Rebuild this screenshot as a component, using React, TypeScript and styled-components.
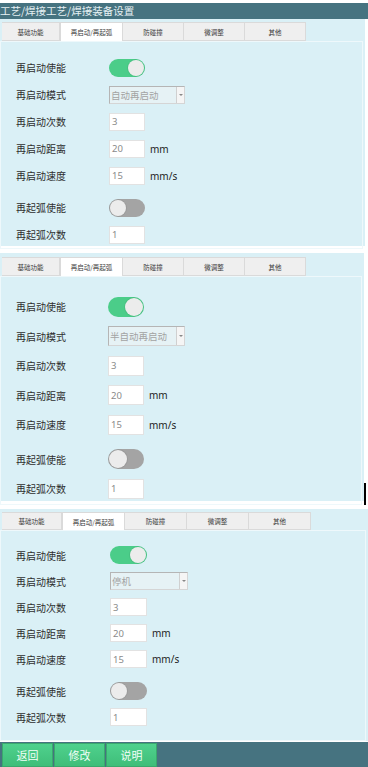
import * as React from 'react';
import styled, { createGlobalStyle } from 'styled-components';

const GlobalStyle = createGlobalStyle`
  html, body {
    margin: 0;
    padding: 0;
    background: #ffffff;
  }
  body {
    font-family: "Noto Sans", "Noto Sans CJK SC", sans-serif;
    color: #333;
  }
`;

interface Layout {
  top: number;
  width: number;
  height: number;
  padTop: number;
  tabH: number;
  tabs: number[];
  contentPad: number;
  rowH: number;
  gap: number;
  ctlX: number;
  ctlH: number;
  smallW: number;
  selectW: number;
}

const Page = styled.div`
  width: 368px;
  height: 767px;
  display: flex;
  flex-direction: column;
  overflow: hidden;
`;

const TitleBar = styled.div`
  margin-top: 3px;
  height: 16px;
  background: #467380;
  color: #e6f1f4;
  font-family: "Noto Sans CJK SC", sans-serif;
  font-size: 10.5px;
  line-height: 16px;
  white-space: nowrap;
`;

const PanelBox = styled.div<{ $w: number; $h: number; $mt: number; $pt: number }>`
  position: relative;
  width: ${({ $w }) => $w}px;
  height: ${({ $h }) => $h}px;
  margin-top: ${({ $mt }) => $mt}px;
  padding-top: ${({ $pt }) => $pt}px;
  box-sizing: border-box;
  background: #daf0f6;
  display: flex;
  flex-direction: column;
`;

const TabBar = styled.div`
  display: flex;
  padding-left: 2px;
`;

const Tab = styled.div<{ $w: number; $h: number; $active?: boolean }>`
  width: ${({ $w }) => $w}px;
  height: ${({ $h }) => $h}px;
  box-sizing: border-box;
  display: flex;
  align-items: center;
  justify-content: center;
  background: ${({ $active }) => ($active ? '#ffffff' : '#efefef')};
  border: 1px solid #dadada;
  border-bottom: ${({ $active }) => ($active ? 'none' : '1px solid #dadada')};
  border-left: ${({ $active }) => ($active ? '1px solid #dadada' : 'none')};
  font-family: "Noto Sans CJK SC", sans-serif;
  font-size: 6.5px;
  color: #3a3a3a;
  white-space: nowrap;
`;

const Content = styled.div<{ $pt: number }>`
  flex: 1;
  margin: 0 2px 0 0;
  border: 1px solid #eef8fb;
  padding: ${({ $pt }) => $pt}px 0 0 15px;
  display: flex;
  flex-direction: column;
`;

const Row = styled.div<{ $h: number; $gap?: number }>`
  display: flex;
  align-items: center;
  height: ${({ $h }) => $h}px;
  margin-top: ${({ $gap }) => $gap || 0}px;
`;

const Label = styled.div<{ $w: number }>`
  width: ${({ $w }) => $w}px;
  font-family: "Noto Sans CJK SC", sans-serif;
  font-size: 10px;
  color: #2e2e2e;
  white-space: nowrap;
`;

const Toggle = styled.div<{ $w: number; $h: number; $on?: boolean }>`
  width: ${({ $w }) => $w}px;
  height: ${({ $h }) => $h}px;
  border-radius: ${({ $h }) => $h / 2}px;
  background: ${({ $on }) => ($on ? '#4bcd89' : '#a4a4a4')};
  display: flex;
  align-items: center;
  justify-content: ${({ $on }) => ($on ? 'flex-end' : 'flex-start')};
  padding: 0 1px;
  box-sizing: border-box;
`;

const Knob = styled.div<{ $s: number }>`
  width: ${({ $s }) => $s}px;
  height: ${({ $s }) => $s}px;
  border-radius: 50%;
  background: #ececec;
  box-shadow: 0 0 0 1px rgba(0, 0, 0, 0.06);
`;

const Select = styled.div<{ $w: number; $h: number }>`
  width: ${({ $w }) => $w}px;
  height: ${({ $h }) => $h}px;
  box-sizing: border-box;
  display: flex;
  background: #e6f2f5;
  border: 1px solid #b5b5b5;
  border-right-color: #d5d5d5;
  border-bottom-color: #d5d5d5;
`;

const SelectText = styled.div`
  flex: 1;
  display: flex;
  align-items: center;
  padding-left: 1px;
  font-family: "Noto Sans CJK SC", sans-serif;
  font-size: 9.5px;
  color: #a3a3a3;
  white-space: nowrap;
  overflow: hidden;
`;

const SelectArrow = styled.div`
  width: 7px;
  background: #f5f5f5;
  border-left: 1px solid #d0d0d0;
  display: flex;
  align-items: center;
  justify-content: center;
  &::after {
    content: '';
    border-left: 2px solid transparent;
    border-right: 2px solid transparent;
    border-top: 2px solid #888;
  }
`;

const Input = styled.div<{ $w: number; $h: number }>`
  width: ${({ $w }) => $w}px;
  height: ${({ $h }) => $h}px;
  box-sizing: border-box;
  background: #ffffff;
  border: 1px solid #e2e2e2;
  display: flex;
  align-items: center;
  padding-left: 2px;
  font-size: 9.5px;
  color: #8a8a8a;
`;

const Unit = styled.div`
  margin-left: 5px;
  font-size: 10px;
  color: #1e1e1e;
`;

const ScrollMark = styled.div<{ $top: number }>`
  position: absolute;
  left: 364px;
  top: ${({ $top }) => $top}px;
  width: 2px;
  height: 22px;
  background: #000;
`;

const BottomBar = styled.div`
  margin-top: 1px;
  flex: 1;
  background: #467380;
  display: flex;
  align-items: stretch;
  gap: 1px;
  padding: 1px 0 0 2px;
`;

const ActionButton = styled.div`
  width: 51px;
  box-sizing: border-box;
  display: flex;
  align-items: center;
  justify-content: center;
  background: linear-gradient(#4fd18d, #3fbe79);
  border: 1px solid #3aa86d;
  color: #f2fff8;
  font-family: "Noto Sans CJK SC", sans-serif;
  font-size: 11px;
`;

const TAB_NAMES = ['基础功能', '再启动/再起弧', '防碰撞', '微调整', '其他'];

interface PanelProps {
  layout: Layout;
  mode: string;
  scrollMark?: boolean;
}

const SettingsPanel = ({ layout: l, mode, scrollMark }: PanelProps): React.ReactElement => {
  const labelW = l.ctlX - 16;
  const knob = l.ctlH - 2;
  return (
    <PanelBox $w={l.width} $h={l.height} $mt={l.top} $pt={l.padTop}>
      <TabBar>
        {TAB_NAMES.map((name, i) => (
          <Tab key={name} $w={l.tabs[i]} $h={l.tabH} $active={i === 1}>
            {name}
          </Tab>
        ))}
      </TabBar>

      <Content $pt={l.contentPad}>
        <Row $h={l.rowH}>
          <Label $w={labelW}>再启动使能</Label>
          <Toggle $w={l.smallW} $h={l.ctlH} $on>
            <Knob $s={knob} />
          </Toggle>
        </Row>
        <Row $h={l.rowH}>
          <Label $w={labelW}>再启动模式</Label>
          <Select $w={l.selectW} $h={l.ctlH}>
            <SelectText>{mode}</SelectText>
            <SelectArrow />
          </Select>
        </Row>
        <Row $h={l.rowH}>
          <Label $w={labelW}>再启动次数</Label>
          <Input $w={l.smallW} $h={l.ctlH}>3</Input>
        </Row>
        <Row $h={l.rowH}>
          <Label $w={labelW}>再启动距离</Label>
          <Input $w={l.smallW} $h={l.ctlH}>20</Input>
          <Unit>mm</Unit>
        </Row>
        <Row $h={l.rowH}>
          <Label $w={labelW}>再启动速度</Label>
          <Input $w={l.smallW} $h={l.ctlH}>15</Input>
          <Unit>mm/s</Unit>
        </Row>
        <Row $h={l.rowH} $gap={l.gap}>
          <Label $w={labelW}>再起弧使能</Label>
          <Toggle $w={l.smallW} $h={l.ctlH}>
            <Knob $s={knob} />
          </Toggle>
        </Row>
        <Row $h={l.rowH}>
          <Label $w={labelW}>再起弧次数</Label>
          <Input $w={l.smallW} $h={l.ctlH}>1</Input>
        </Row>
      </Content>

      {scrollMark && <ScrollMark $top={230} />}
    </PanelBox>
  );
};

const PANELS: { layout: Layout; mode: string; scrollMark?: boolean }[] = [
  {
    mode: '自动再启动',
    layout: {
      top: 0, width: 365, height: 227, padTop: 3, tabH: 19,
      tabs: [58, 63, 61, 61, 61],
      contentPad: 12, rowH: 27, gap: 5,
      ctlX: 109, ctlH: 18, smallW: 36, selectW: 76,
    },
  },
  {
    mode: '半自动再启动',
    scrollMark: true,
    layout: {
      top: 7, width: 364, height: 248, padTop: 4, tabH: 19,
      tabs: [58, 63, 61, 61, 61],
      contentPad: 15, rowH: 29.5, gap: 5,
      ctlX: 108, ctlH: 20, smallW: 36, selectW: 77,
    },
  },
  {
    mode: '停机',
    layout: {
      top: 8, width: 368, height: 232, padTop: 3, tabH: 18,
      tabs: [60, 63, 62, 62, 62],
      contentPad: 11, rowH: 26, gap: 6,
      ctlX: 110, ctlH: 18, smallW: 37, selectW: 78,
    },
  },
];

const App = (): React.ReactElement => (
  <>
    <GlobalStyle />
    <Page>
      <TitleBar>工艺/焊接工艺/焊接装备设置</TitleBar>

      {PANELS.map((p, i) => (
        <SettingsPanel key={i} layout={p.layout} mode={p.mode} scrollMark={p.scrollMark} />
      ))}

      <BottomBar>
        <ActionButton>返回</ActionButton>
        <ActionButton>修改</ActionButton>
        <ActionButton>说明</ActionButton>
      </BottomBar>
    </Page>
  </>
);

export default App;
